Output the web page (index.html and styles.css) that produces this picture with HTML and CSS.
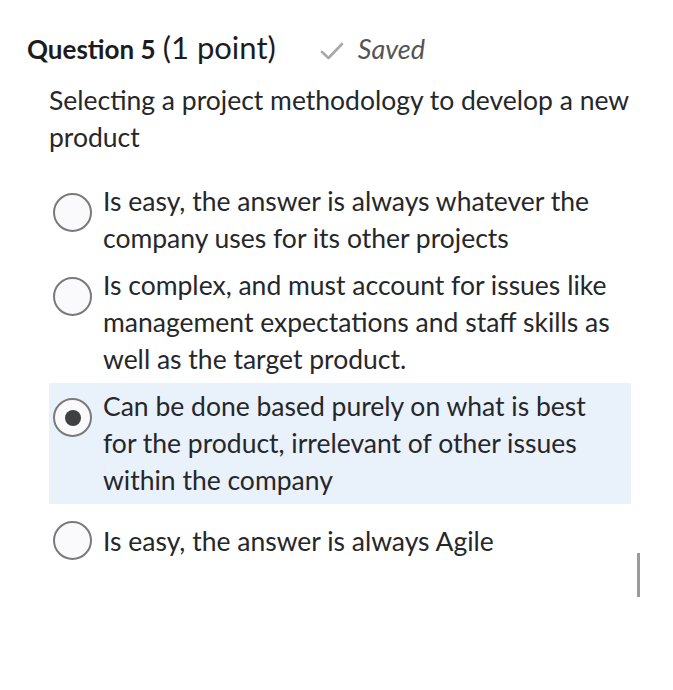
FILE: index.html
```html
<!DOCTYPE html>
<html>
<head>
<meta charset="utf-8">
<link rel="stylesheet" href="styles.css">
</head>
<body>
<div class="page">
  <div class="header">
    <h2 class="title"><span class="qnum">Question 5</span> <span class="points">(1 point)</span></h2>
    <div class="saved">
      <svg class="check" width="24" height="20" viewBox="0 0 24 20"><path d="M2 11 L8.5 17 L22 3" fill="none" stroke="#a8a8a8" stroke-width="2.6" stroke-linecap="round" stroke-linejoin="round"/></svg>
      <span class="saved-text">Saved</span>
    </div>
  </div>
  <p class="question">Selecting a project methodology to develop a new product</p>
  <div class="options">
    <div class="option">
      <span class="radio"></span>
      <span class="label">Is easy, the answer is always whatever the company uses for its other projects</span>
    </div>
    <div class="option">
      <span class="radio"></span>
      <span class="label">Is complex, and must account for issues like management expectations and staff skills as well as the target product.</span>
    </div>
    <div class="option selected">
      <span class="radio checked"></span>
      <span class="label">Can be done based purely on what is best for the product, irrelevant of other issues within the company</span>
    </div>
    <div class="option last">
      <span class="radio"></span>
      <span class="label">Is easy, the answer is always Agile</span>
    </div>
  </div>
  <div class="cursor-row"><span class="cursor"></span></div>
</div>
</body>
</html>
```

FILE: styles.css
```css
html, body {
  margin: 0;
  padding: 0;
  background: #ffffff;
}
body {
  font-family: Lato, "Open Sans", sans-serif;
  color: #26272a;
}
.page {
  padding: 28px 42px 0 49px;
}
.header {
  display: flex;
  align-items: baseline;
  margin-left: -22px;
  height: 38px;
}
.title {
  margin: 0;
  font-weight: normal;
  font-size: 28px;
  color: #1c1c1e;
}
.qnum {
  font-weight: 700;
  font-size: 26px;
}
.points {
  font-size: 31px;
}
.saved {
  display: flex;
  align-items: baseline;
  margin-left: 44px;
  color: #555;
}
.check {
  align-self: center;
  margin-right: 14px;
  position: relative;
  top: 2px;
}
.saved-text {
  font-style: italic;
  font-size: 27px;
}
.question {
  margin: 16px 0 0 0;
  font-size: 26.5px;
  line-height: 37px;
}
.options {
  margin-top: 22px;
  width: 582px;
}
.option {
  display: flex;
  align-items: flex-start;
  padding: 5px 12px 5px 4px;
  font-size: 26.5px;
  line-height: 37px;
}
.option.selected {
  background: #e9f1fb;
}
.option.last {
  margin-top: 14px;
}
.radio {
  flex: none;
  width: 35px;
  height: 35px;
  border: 2px solid #7a7a7a;
  border-radius: 50%;
  background: #fafafc;
  margin-top: 10px;
  margin-right: 11px;
  display: flex;
  align-items: center;
  justify-content: center;
}
.option.last .radio {
  margin-top: -2px;
}
.radio.checked::after {
  content: "";
  width: 16px;
  height: 16px;
  border-radius: 50%;
  background: #3f4042;
}
.label {
  flex: 1;
}
.cursor-row {
  display: flex;
  justify-content: flex-end;
  width: 591px;
  margin-top: -12px;
}
.cursor {
  width: 3px;
  height: 44px;
  background: #9a9a9a;
}
```
